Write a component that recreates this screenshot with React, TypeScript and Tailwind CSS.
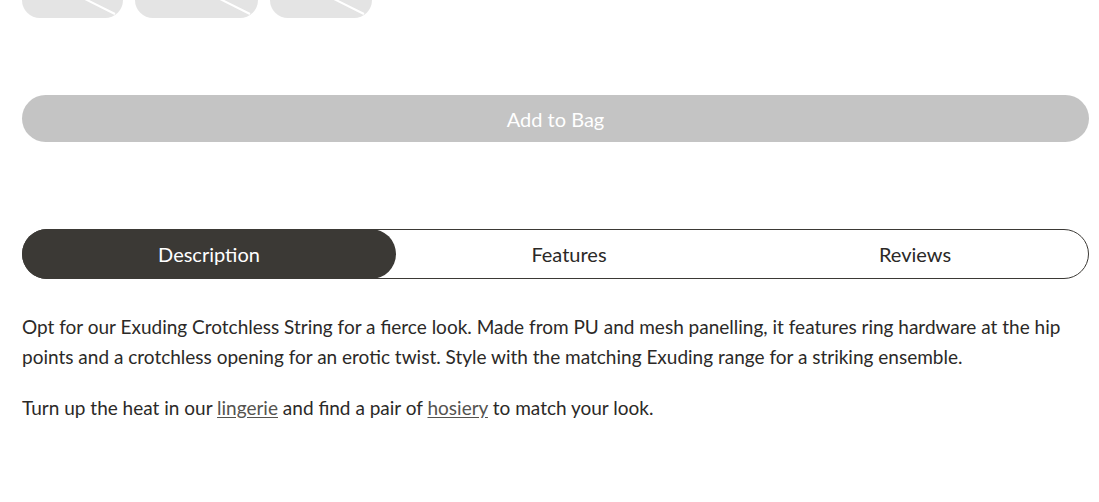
const swatches = [101, 123, 102]

const tabs = ["Description", "Features", "Reviews"]

export default function App() {
  return (
    <div
      className="min-h-[502px] w-full bg-white pl-[22px] pr-[10px] text-[#2b2927]"
      style={{ fontFamily: "Lato, 'Noto Sans', sans-serif" }}
    >
      <div className="flex gap-3">
        {swatches.map((w, i) => (
          <div
            key={i}
            className="relative h-[18px] overflow-hidden rounded-b-[22px] bg-[#e4e4e4]"
            style={{ width: w }}
          >
            <svg
              className="absolute inset-0 h-full w-full"
              viewBox={`0 0 ${w} 18`}
              preserveAspectRatio="none"
            >
              <line
                x1={w - 40}
                y1={-2}
                x2={w - 8}
                y2={14}
                stroke="#ffffff"
                strokeWidth="2"
              />
            </svg>
          </div>
        ))}
      </div>

      <button className="mt-[77px] flex h-[47px] w-full items-center justify-center rounded-full bg-[#c4c4c4] text-[20px] text-white">
        Add to Bag
      </button>

      <div className="mt-[87px] flex h-[50px] w-full rounded-full border border-[#3b3935]">
        {tabs.map((t, i) => (
          <div
            key={t}
            className={
              i === 0
                ? "-ml-px -my-px flex w-[374px] items-center justify-center rounded-full bg-[#3b3935] text-[20px] text-white"
                : "flex flex-1 items-center justify-center text-[20px] text-[#2b2927]"
            }
          >
            {t}
          </div>
        ))}
      </div>

      <div className="mt-[33px] text-[19px] leading-[30px]">
        <p>
          Opt for our Exuding Crotchless String for a fierce look. Made from PU and mesh panelling, it features
          ring hardware at the hip points and a crotchless opening for an erotic twist. Style with the matching
          Exuding range for a striking ensemble.
        </p>
        <p className="mt-[21px]">
          Turn up the heat in our{" "}
          <a href="#" className="text-[#55534f] underline underline-offset-2">
            lingerie
          </a>{" "}
          and find a pair of{" "}
          <a href="#" className="text-[#55534f] underline underline-offset-2">
            hosiery
          </a>{" "}
          to match your look.
        </p>
      </div>
    </div>
  )
}
